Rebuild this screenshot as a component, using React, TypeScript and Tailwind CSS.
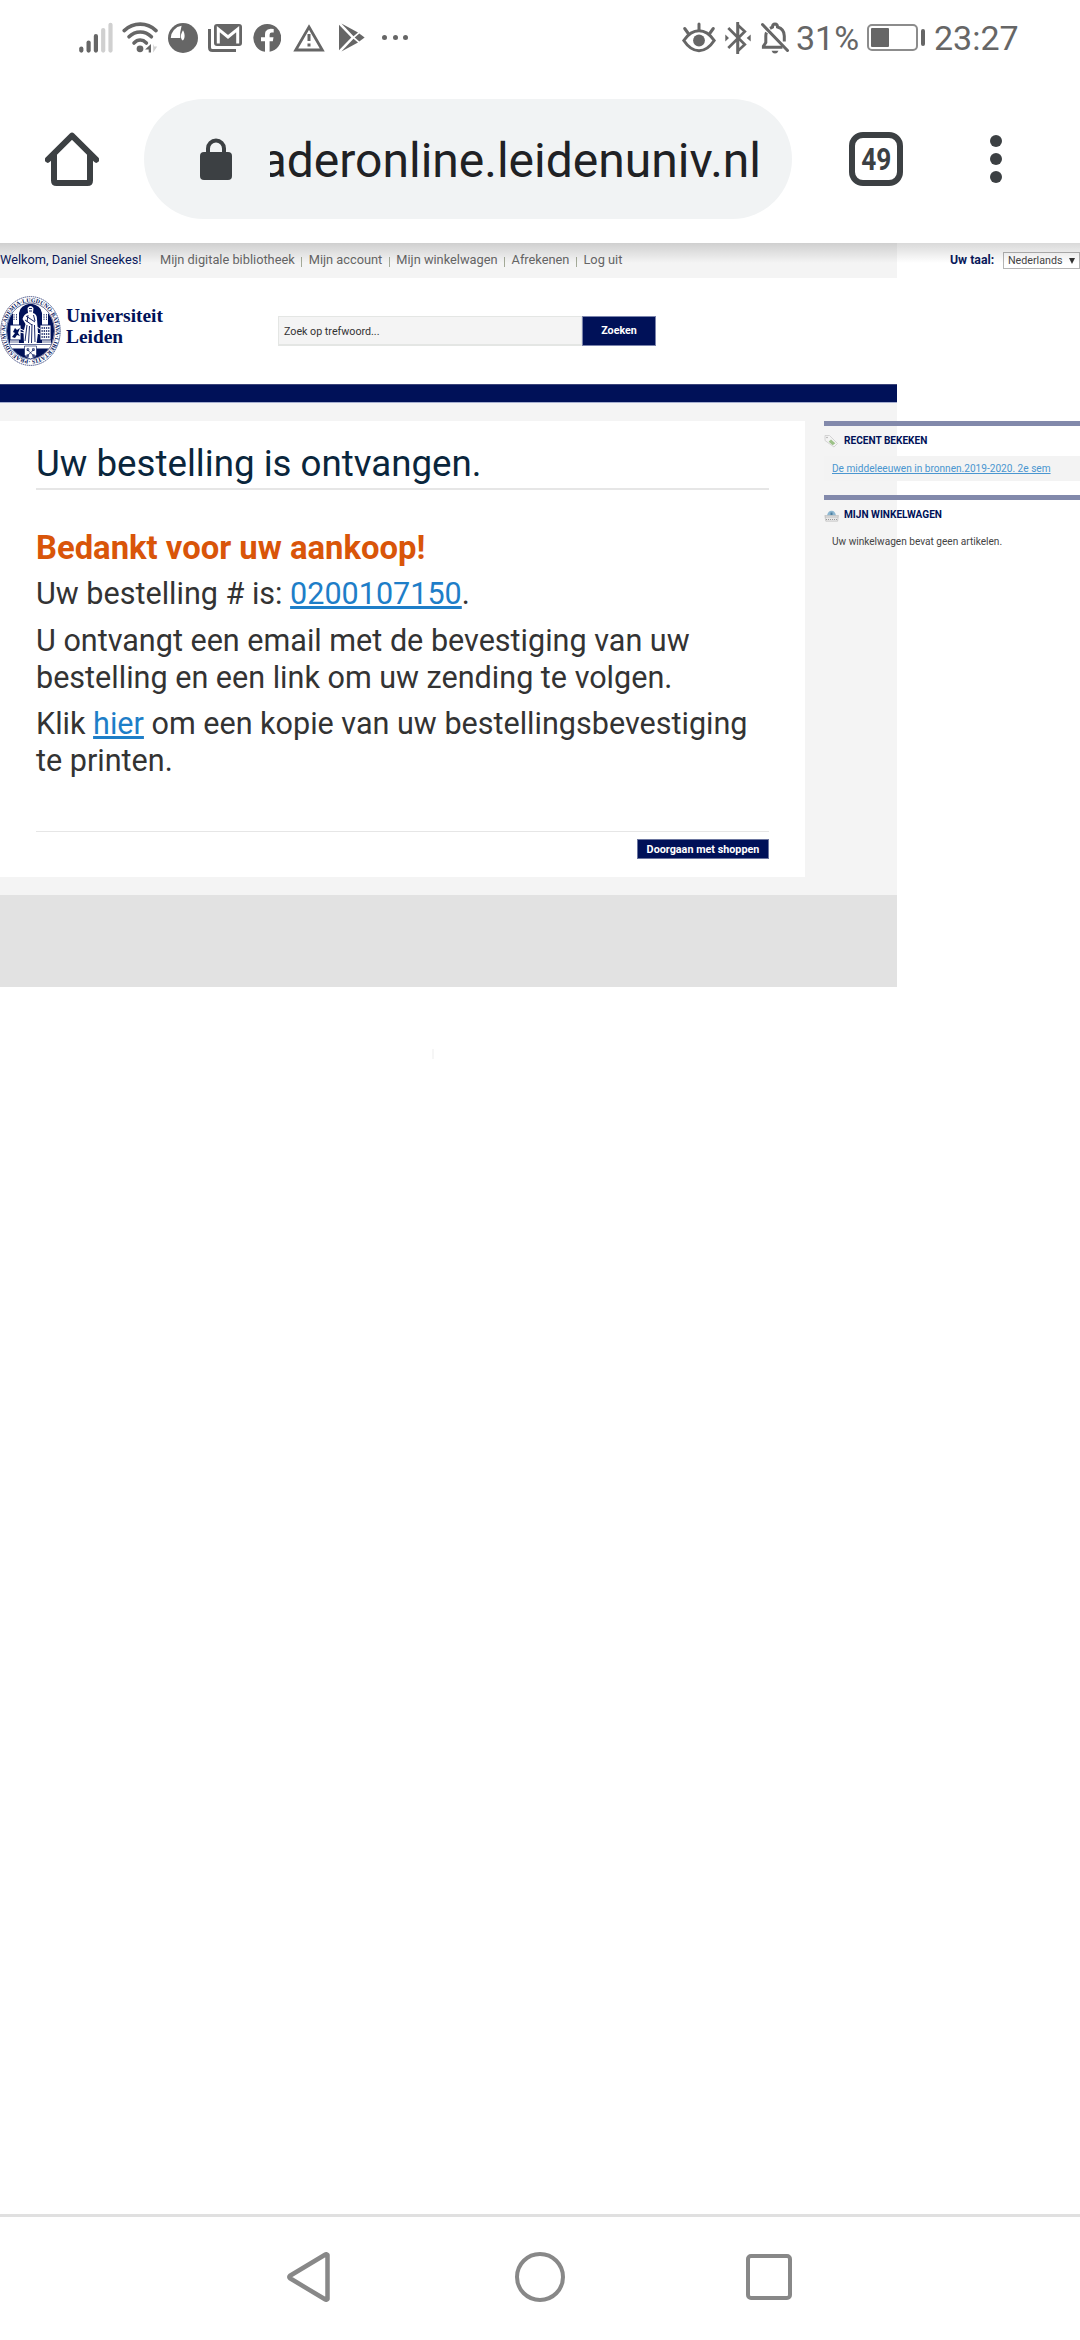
import type { ReactNode } from "react";

const GREY = "#666666";
const DARK = "#3c4043";
const NAVY = "#001158";

function SignalIcon() {
  const bars = [
    { x: 1.5, top: 25.5, c: GREY },
    { x: 8.8, top: 19.5, c: GREY },
    { x: 16.1, top: 13, c: GREY },
    { x: 23.4, top: 7, c: "#d0d0d0" },
    { x: 30.7, top: 1.8, c: "#d0d0d0" },
  ];
  return (
    <svg width="34" height="32" viewBox="0 0 34 32">
      {bars.map((b) => (
        <path key={b.x} d={`M${b.x + 0.8} ${b.top + 1}V28.6`} stroke={b.c} strokeWidth="4.2" strokeLinecap="round" />
      ))}
    </svg>
  );
}

function WifiIcon() {
  return (
    <svg width="38" height="32" viewBox="0 0 38 32" fill="none" stroke={GREY} strokeWidth="3.6" strokeLinecap="round">
      <path d="M2.2 8.6C11.5 0 25 0 34 8.6" />
      <path d="M7 14.8C13.5 8.3 23 8.3 29.4 14.8" />
      <path d="M12 21C15.8 17.2 20.6 17.2 24.4 21" />
      <circle cx="18" cy="26.8" r="3.4" fill={GREY} stroke="none" />
      <path d="M29 22v8.6h-2.3v-3h-3.6z" fill={GREY} stroke="none" />
      <path d="M31.2 22v8.6l4-6h-3z" fill="#d0d0d0" stroke="none" />
    </svg>
  );
}

function DialIcon() {
  return (
    <svg width="30" height="30" viewBox="0 0 30 30">
      <circle cx="15" cy="15" r="15" fill={GREY} />
      <path d="M2.8 15A12.4 12.4 0 0 1 13.6 2.8L12.2 9.6V15z" fill="#fff" />
      <path d="M15 7.3C17.3 11 17 16 14.8 17.6C11.8 15.5 12.6 11 15 7.3z" fill="#fff" />
    </svg>
  );
}

function MailIcon() {
  return (
    <svg width="34" height="28" viewBox="0 0 34 28">
      <path d="M1.5 5V23.5Q1.5 26.5 4.500 26.500H28" fill="none" stroke={GREY} strokeWidth="3" />
      <rect x="6" y="0" width="28" height="22" rx="3" fill={GREY} />
      <path d="M10.300 19.500V5.200L20 13L29.700 5.200V19.500" fill="none" stroke="#fff" strokeWidth="3" />
    </svg>
  );
}

function FacebookIcon() {
  return (
    <svg width="28" height="28" viewBox="0 0 28 28">
      <path
        fill={GREY}
        d="M14 0a14 14 0 0 1 2.600 27.800V17.200h3.200l.7-4h-3.900v-2.500q0-2.200 2.200-2.200h1.900V5.100q-6-1.200-8 2.200q-.7 1.200-.7 3.400v2.500H8v4h4v10.600A14 14 0 0 1 14 0z"
      />
    </svg>
  );
}

function WarningIcon() {
  return (
    <svg width="32" height="28" viewBox="0 0 32 28">
      <path d="M16 3L29.300 26H2.700z" fill="none" stroke={GREY} strokeWidth="2.800" />
      <path d="M16 10v7M16 19.500v3" stroke={GREY} strokeWidth="3" />
    </svg>
  );
}

function PlayIcon() {
  return (
    <svg width="26" height="29" viewBox="0 0 26 29" fill={GREY}>
      <path d="M0 1.800V27.200L12.300 14.500z" />
      <path d="M2.400 0.500L19 9.500L14.500 13.200z" />
      <path d="M2.400 28.500L19 19.500L14.500 15.800z" />
      <path d="M20.300 10.600L25.600 14.500L20.300 18.400L15.700 14.500z" />
    </svg>
  );
}

function EyeIcon() {
  return (
    <svg width="34" height="31" viewBox="0 0 34 31" fill="none" stroke={GREY} strokeWidth="3" strokeLinecap="round">
      <path d="M1.800 18.500Q8.500 8.800 17 8.800T32.200 18.500Q25.500 28.700 17 28.700T1.800 18.500z" />
      <circle cx="17" cy="18.500" r="5.900" fill={GREY} stroke="none" />
      <path d="M17 8V2M6.300 11.500L2.700 6.500M27.700 11.500L31.300 6.500" />
    </svg>
  );
}

function BluetoothIcon() {
  return (
    <svg width="26" height="32" viewBox="0 0 26 32" fill="none" stroke={GREY} strokeWidth="2.700">
      <path d="M3.300 6L19.800 22.500L12.800 29V3L19.800 9.500L3.300 26" />
      <path d="M12.800 0V32" />
      <path d="M.3 12.500L4 16L.3 19.500zM25.700 12.500L21.700 16L25.700 19.500z" fill={GREY} stroke="none" />
    </svg>
  );
}

function BellOffIcon() {
  return (
    <svg width="29" height="32" viewBox="0 0 29 32" fill="none" stroke={GREY} strokeWidth="3">
      <path d="M1.500 2.500L26.500 28.500" strokeLinecap="round" />
      <path d="M5.500 10.500Q4.800 12 4.800 14V20.500L2.400 24.300V25.200H21.500" />
      <path d="M9 6.300L11.500 5Q11.500 2 14 2T16.500 5Q23.300 7 23.300 14V19.500" />
      <path d="M10.500 28.800h7q-.8 2.700-3.500 2.700t-3.500-2.700z" fill={GREY} stroke="none" />
    </svg>
  );
}

function StatusBar() {
  return (
    <div className="flex h-[75px] items-center text-[#666666]">
      <div className="ml-[79px] flex items-center">
        <SignalIcon />
        <div className="ml-[9px]"><WifiIcon /></div>
        <div className="ml-[8px]"><DialIcon /></div>
        <div className="ml-[10px]"><MailIcon /></div>
        <div className="ml-[11px]"><FacebookIcon /></div>
        <div className="ml-[12px]"><WarningIcon /></div>
        <div className="ml-[14px]"><PlayIcon /></div>
        <div className="ml-[17px] flex gap-[5.500px]">
          <i className="size-[5px] rounded-full bg-[#666666]" />
          <i className="size-[5px] rounded-full bg-[#666666]" />
          <i className="size-[5px] rounded-full bg-[#666666]" />
        </div>
      </div>
      <div className="ml-auto mr-[62px] flex items-center">
        <EyeIcon />
        <div className="ml-[9px]"><BluetoothIcon /></div>
        <div className="ml-[10px]"><BellOffIcon /></div>
        <div className="ml-[6px] w-[62px] whitespace-nowrap text-[34px] leading-[40px]">31%</div>
        <div className="ml-[9px] flex h-[27px] w-[51px] rounded-[5px] border-2 border-[#8c8c8c] p-[2px]">
          <div className="w-[18px] rounded-[1px] bg-[#666666]" />
        </div>
        <div className="ml-[3px] h-[17px] w-[4px] rounded-full bg-[#666666]" />
        <div className="ml-[9px] w-[84px] whitespace-nowrap text-[34px] leading-[40px]">23:27</div>
      </div>
    </div>
  );
}

function BrowserBar() {
  return (
    <div className="flex h-[168px] items-center">
      <svg className="ml-[45px]" width="54" height="54" viewBox="0 0 54 54" fill="none" stroke={DARK} strokeWidth="6">
        <path d="M2.800 27.700L27 3.700L51.200 27.700" strokeLinecap="round" strokeLinejoin="round" />
        <path d="M9 22V48.500Q9 51 11.500 51H42.500Q45 51 45 48.500V22" />
      </svg>
      <div className="ml-[45px] flex h-[120px] w-[648px] items-center rounded-full bg-[#f1f3f4]">
        <svg className="ml-[56px]" width="32" height="42" viewBox="0 0 32 42">
          <rect y="14" width="32" height="28" rx="4" fill={DARK} />
          <path d="M8 16V10.500a8 8 0 0 1 16 0V16" fill="none" stroke={DARK} strokeWidth="4" />
        </svg>
        <div className="ml-[38px] mt-[3px] flex w-[491px] justify-end overflow-hidden whitespace-nowrap text-[48px] leading-[60px] text-[#202124]">
          aderonline.leidenuniv.nl
        </div>
      </div>
      <div className="ml-[57px] flex size-[54px] items-center justify-center rounded-[14px] border-[6px] border-[#3c4043] text-[32px] font-bold leading-none text-[#3c4043]">
        <span className="scale-x-[0.82]">49</span>
      </div>
      <div className="ml-[87px] flex flex-col gap-[6px]">
        <i className="size-[12px] rounded-full bg-[#3c4043]" />
        <i className="size-[12px] rounded-full bg-[#3c4043]" />
        <i className="size-[12px] rounded-full bg-[#3c4043]" />
      </div>
    </div>
  );
}

function Separator() {
  return <i className="mx-[6.500px] mt-[3px] h-[10px] w-px bg-[#a4aa98]" />;
}

function TopLinks() {
  return (
    <div className="flex h-[35px] w-[897px] items-center bg-[#f4f4f4] pb-px text-[12.800px] leading-[16px] text-[#666666]">
      <span className="w-[160px] whitespace-nowrap text-[#0a1a5c]">Welkom, Daniel Sneekes!</span>
      <span>Mijn digitale bibliotheek</span>
      <Separator />
      <span>Mijn account</span>
      <Separator />
      <span>Mijn winkelwagen</span>
      <Separator />
      <span>Afrekenen</span>
      <Separator />
      <span>Log uit</span>
    </div>
  );
}

function Seal() {
  return (
    <svg width="61" height="70" viewBox="0 0 61 70">
      <defs>
        <path id="ring" d="M30.500 63.800A25.200 28.800 0 0 1 30.500 6.200A25.200 28.800 0 0 1 30.500 63.800" />
        <clipPath id="inner"><ellipse cx="30.500" cy="35" rx="23.500" ry="27.500" /></clipPath>
      </defs>
      <ellipse cx="30.500" cy="35" rx="29.700" ry="34.400" fill="#fff" stroke={NAVY} strokeWidth=".7" strokeDasharray="1.500 .6" />
      <text fill={NAVY} fontSize="5.900" fontWeight="700" fontFamily="Liberation Serif, serif">
        <textPath href="#ring" textLength="168">·PRAESIDIUM·ACADEMIA·LUGDUNO·BATAVA·LIBERTATIS</textPath>
      </text>
      <ellipse cx="30.500" cy="35" rx="24" ry="28" fill="#fff" stroke={NAVY} strokeWidth=".6" />
      <g clipPath="url(#inner)">
        <path d="M19 31V17Q20 9 30.500 7.500Q41 9 42 17V47H19z" fill={NAVY} />
        <path d="M7 27Q9 21 13 17V29H7zM54 27Q52 21 48 17V29H54zM7 29H10V48H7zM51 29H54V48H51z" fill={NAVY} />
        <path d="M14 18v6M16.500 18v6M44 18v6M46.500 18v6" stroke={NAVY} strokeWidth=".8" strokeDasharray="1.600 .7" />
        <rect x="10" y="29" width="11" height="15" fill="#fff" stroke={NAVY} strokeWidth=".9" />
        <path d="M12 41l3-4-2-1 2-4 2 2 3-2-2 5 2 3-3-1-2 3z" fill={NAVY} />
        <rect x="40" y="29" width="11" height="15" fill="#fff" stroke={NAVY} strokeWidth=".9" />
        <path d="M41.500 32h8M41.500 35h8M41.500 38h8M41.500 41h8" stroke={NAVY} strokeWidth="1.300" strokeDasharray="1.300 .9" />
        <path d="M27.500 12Q30.500 8 33.500 12L33 17Q37 18 37 23L38 37L36.500 48H24L23.500 36L25.500 28L22.500 23Q24 18 28 17z" fill="#fff" />
        <path d="M29 12.500h3M29 15h3M26 20l9 6M25 24l7 5M27 29l-2 16M29.500 30l-1 17M32 28l-.5 19M34.500 29l.5 17M28 19l-1 7M33.500 19l1.500 6" stroke={NAVY} strokeWidth=".9" fill="none" />
        <path d="M20 33l5 2M20 36l4 1M37 31l3 2M37 37l3 1" stroke="#fff" strokeWidth="1" />
        <path d="M9 46H24M37 46H52M9 48.500H52" stroke={NAVY} strokeWidth=".6" />
        <path d="M8 52.500H53L50 60L30 65L11 60z" fill={NAVY} />
      </g>
      <path d="M24.500 50H36.500V58.500Q36 61 30.500 63Q25 61 24.500 58.500z" fill="#fff" stroke={NAVY} strokeWidth=".6" />
      <path d="M27 53.500l7 6.500M34 53.500l-7 6.500M27 52.700h1.800v1.800H27zM32.500 52.700h1.800v1.800h-1.800zM26.800 58.800h1.700v1.700h-1.700zM32.700 58.800h1.700v1.700h-1.700z" fill="none" stroke={NAVY} strokeWidth=".7" />
    </svg>
  );
}

function SiteHeader() {
  return (
    <div className="flex h-[106px] w-[897px] items-start bg-white">
      <div className="flex w-[278px]">
        <div className="mt-[18px]"><Seal /></div>
        <div className="ml-[5px] mt-[28px] font-['Liberation_Serif',serif] text-[19.400px] font-bold leading-[20.500px] text-[#001158]">
          <div>Universiteit</div>
          <div>Leiden</div>
        </div>
      </div>
      <div className="mt-[38px] flex h-[30px]">
        <div className="w-[304px] border border-b-2 border-[#e4e6e4] bg-[#f4f4f4] pl-[5px] pt-[1px] text-[10.700px] leading-[28px] text-[#333333]">
          Zoek op trefwoord...
        </div>
        <div className="w-[74px] border border-[#7b84ac] bg-[#001158] text-center text-[10.700px] font-bold leading-[27px] text-white">
          Zoeken
        </div>
      </div>
    </div>
  );
}

function OrderPanel() {
  return (
    <div className="h-[456px] w-[805px] bg-white pl-[36px] pr-[36px] text-[#333333]">
      <h1 className="h-[69px] border-b-2 border-[#e6e6e6] pt-[22px] text-[36.700px] leading-[42px] text-[#0a263c]">
        Uw bestelling is ontvangen.
      </h1>
      <h2 className="mt-[38px] text-[32.800px] font-bold leading-[40px] text-[#d95509]">Bedankt voor uw aankoop!</h2>
      <div className="mt-[7px] flex flex-col gap-[9.500px] whitespace-nowrap text-[30.550px] leading-[37px]">
        <p>
          Uw bestelling # is: <a className="text-[#1e7ec8] underline">0200107150</a>.
        </p>
        <p>
          U ontvangt een email met de bevestiging van uw
          <br />
          bestelling en een link om uw zending te volgen.
        </p>
        <p>
          Klik <a className="text-[#1e7ec8] underline">hier</a> om een kopie van uw bestellingsbevestiging
          <br />
          te printen.
        </p>
      </div>
      <div className="mt-[52px] flex justify-end border-t border-[#e6e6e6] pt-[7px]">
        <div className="h-[20px] w-[132px] border border-[#6b759f] bg-[#001158] text-center text-[10.800px] font-bold leading-[19px] text-white">
          Doorgaan met shoppen
        </div>
      </div>
    </div>
  );
}

function SideBlock({ title, icon, children }: { title: string; icon: ReactNode; children: ReactNode }) {
  return (
    <div className="h-[74px] w-[257px]">
      <div className="h-[5px] bg-[#8289ab]" />
      <div className="flex h-[30px] items-center text-[10.100px] font-bold text-[#001158]">
        <div className="mr-[5px] w-[15px]">{icon}</div>
        {title}
      </div>
      {children}
    </div>
  );
}

function TagIcon() {
  return (
    <svg width="15" height="14" viewBox="0 0 15 14">
      <path d="M1 1.500H5.500L13.500 9.500L10 13L1 6.500z" fill="#f3f3f3" stroke="#cfcfcf" strokeWidth=".9" />
      <path d="M7 5.500L11.300 9.300L8.700 11.300L4.700 7.700z" fill="#9cc187" />
      <circle cx="3" cy="3.500" r=".8" fill="#aaa" />
    </svg>
  );
}

function BasketIcon() {
  return (
    <svg className="mt-[2px]" width="15" height="12" viewBox="0 0 15 12">
      <path d="M3 5.500Q4 1 7.500 .8T12 5.500z" fill="#8db7d1" />
      <path d="M6.500 2.500h2V5h-2z" fill="#4d7f9f" />
      <path d="M.8 5.500H14.500L13.600 11.200H1.800z" fill="#e8e8e8" stroke="#aaa" strokeWidth=".5" />
      <path d="M1.500 7h12.500M2 9.500h12" stroke="#999" strokeWidth="1" strokeDasharray="1 1" />
    </svg>
  );
}

function Sidebar() {
  return (
    <div className="ml-[19px] w-[256px]">
      <SideBlock title="RECENT BEKEKEN" icon={<TagIcon />}>
        <div className="h-[25px] whitespace-nowrap bg-[#f3f3f3] pl-[8px] text-[10.100px] leading-[25px]">
          <a className="text-[#4a96d0] underline">De middeleeuwen in bronnen.2019-2020. 2e sem</a>
        </div>
      </SideBlock>
      <SideBlock title="MIJN WINKELWAGEN" icon={<BasketIcon />}>
        <div className="whitespace-nowrap pl-[8px] pt-[4px] text-[10.100px] leading-[16px] text-[#444444]">
          Uw winkelwagen bevat geen artikelen.
        </div>
      </SideBlock>
    </div>
  );
}

function LanguagePicker() {
  return (
    <div className="ml-auto flex items-start pt-[9px]">
      <span className="mr-[7px] w-[46px] whitespace-nowrap text-[12.300px] font-bold leading-[17px] text-[#0a1a5c]">Uw taal:</span>
      <div className="flex h-[17px] w-[77px] items-center border border-[#b5b5b5] bg-white pl-[4px] text-[10.700px] leading-[15px] text-[#444444]">
        Nederlands
        <svg className="ml-auto mr-[4px]" width="6" height="6" viewBox="0 0 6 6">
          <path d="M0 0H6L3 6z" fill="#333" />
        </svg>
      </div>
    </div>
  );
}

function NavBar() {
  return (
    <div className="flex h-[126px] items-center border-t-[3px] border-[#e0e0e0] pb-[3px]">
      <svg className="ml-[287px]" width="43" height="50" viewBox="0 0 43 50" fill="none" stroke="#888" strokeWidth="4.500" strokeLinejoin="round">
        <path d="M40.500 3V47Q39.500 48.200 38 47.300L3 26.300Q1.500 25 3 23.700L38 2.700Q39.500 1.800 40.500 3z" />
      </svg>
      <div className="ml-[185px] size-[50px] rounded-full border-[4.500px] border-[#888888]" />
      <div className="ml-[181px] size-[46px] rounded-[5px] border-[4px] border-[#888888]" />
    </div>
  );
}

export default function App() {
  return (
    <div className="flex h-[2340px] w-[1080px] flex-col overflow-hidden bg-white font-[Roboto,sans-serif]">
      <StatusBar />
      <BrowserBar />
      <div className="relative flex-1">
        <div className="absolute inset-x-0 top-0 h-[20px] bg-gradient-to-b from-black/15 to-transparent" />
        <div className="flex h-[35px]">
          <TopLinks />
          <LanguagePicker />
        </div>
        <SiteHeader />
        <div className="h-[19px] w-[897px] border-y border-t-[#3b4479] border-b-[#a5aecf] bg-[#001158]" />
        <div className="h-[492px] w-[897px] bg-[#f4f4f4] pt-[18px]">
          <div className="flex w-[1080px]">
            <OrderPanel />
            <Sidebar />
          </div>
        </div>
        <div className="h-[92px] w-[897px] bg-[#e2e2e2]" />
        <div className="ml-[432px] mt-[62px] h-[10px] w-[2px] bg-[#f6f6f6]" />
      </div>
      <NavBar />
    </div>
  );
}
